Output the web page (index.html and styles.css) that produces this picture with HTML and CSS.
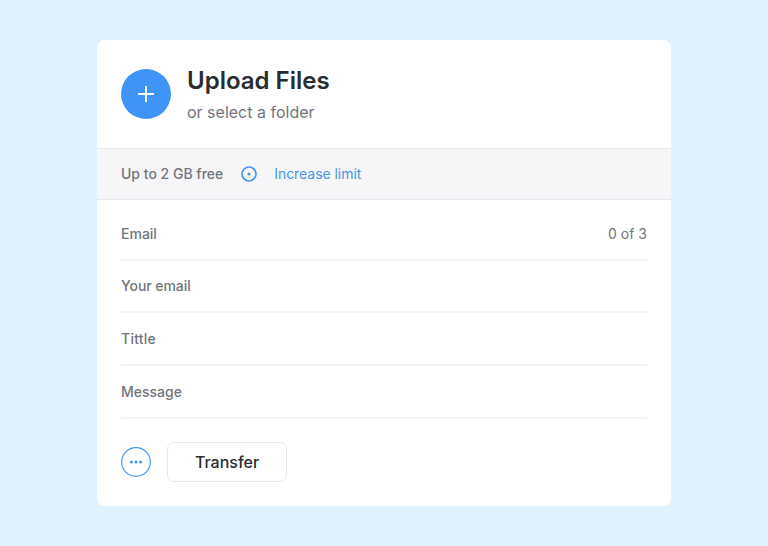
FILE: index.html
```html
<!DOCTYPE html>
<html lang="en">
<head>
<meta charset="utf-8">
<title>Upload Files</title>
<link rel="stylesheet" href="styles.css">
</head>
<body>
<main class="card">
  <header class="upload">
    <button class="add" aria-label="Add files"><svg width="50" height="50" viewBox="0 0 50 50"><path d="M25 17v16M17 25h16" stroke="#fff" stroke-width="2"/></svg></button>
    <div>
      <h1 class="title">Upload Files</h1>
      <p class="subtitle">or select a folder</p>
    </div>
  </header>
  <section class="limit">
    <span>Up to 2 GB free</span>
    <svg class="limit-icon" width="16" height="16" viewBox="0 0 16 16"><circle cx="8" cy="8" r="7" fill="none" stroke="#4596ec" stroke-width="1.7"/><circle cx="8" cy="8" r="1.6" fill="#4596ec"/></svg>
    <a class="link">Increase limit</a>
  </section>
  <form class="form">
    <div class="field"><span>Email</span><span class="count">0 of 3</span></div>
    <div class="field sender">Your email</div>
    <div class="field subject">Tittle</div>
    <div class="field">Message</div>
    <div class="actions">
      <svg width="30" height="30" viewBox="0 0 30 30"><circle cx="15" cy="15" r="14.4" fill="none" stroke="#4596ec" stroke-width="1.2"/><g fill="#4596ec"><circle cx="10.4" cy="15" r="1.5"/><circle cx="15" cy="15" r="1.5"/><circle cx="19.6" cy="15" r="1.5"/></g></svg>
      <button type="button" class="transfer">Transfer</button>
    </div>
  </form>
</main>
</body>
</html>
```
FILE: styles.css
```css
* { box-sizing: border-box; }
body { margin: 0; height: 546px; background: #e0f1ff; font-family: Inter, sans-serif; color: #72757c; padding: 40px 0 0 97px; }
.card { width: 574px; height: 466px; background: #fff; border-radius: 8px; overflow: hidden; }
.upload { display: flex; height: 108px; padding: 25px 24px 0; gap: 16px; }
.add { width: 50px; height: 50px; margin-top: 4px; padding: 0; border: 0; border-radius: 50%; background: #4094f7; }
.add svg { display: block; }
.title { margin: 0; font-size: 24px; line-height: 32px; font-weight: 600; color: #292c31; }
.subtitle { margin: 3px 0 0; font-size: 16px; line-height: 24px; }
.limit { display: flex; align-items: center; height: 52px; padding: 0 24px; background: #f6f6f8; border: solid #e6e7ea; border-width: 1px 0; font-size: 14px; line-height: 18px; font-weight: 500; }
.limit-icon { margin: 0 17px 0 18px; }
.link { color: #4596ec; font-weight: 400; letter-spacing: -0.05px; }
.form { padding: 8px 24px 0; }
.field { display: flex; justify-content: space-between; align-items: center; height: 53px; border-bottom: 2px solid #f2f3f5; font-size: 14px; font-weight: 500; }
.sender { height: 52px; padding-bottom: 1px; letter-spacing: -0.05px; }
.subject { letter-spacing: 0.25px; }
.count { font-weight: 400; }
.actions { display: flex; align-items: center; gap: 16px; margin-top: 23px; }
.transfer { width: 120px; height: 40px; border: 1px solid #e5e7ea; border-radius: 7px; background: #fff; color: #292c31; font: 500 16px Inter, sans-serif; padding: 0; }
```
